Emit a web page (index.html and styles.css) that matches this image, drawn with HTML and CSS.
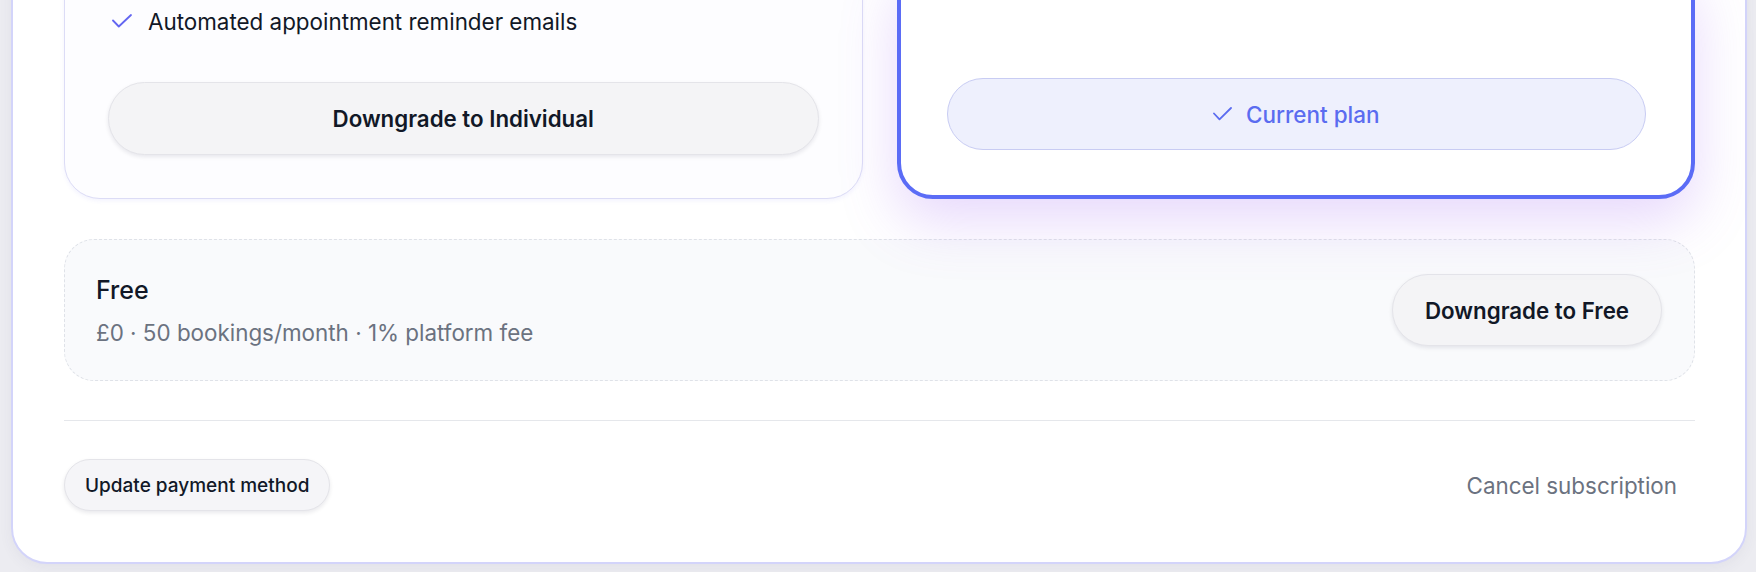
FILE: index.html
```html
<!DOCTYPE html>
<html lang="en">
<head>
<meta charset="utf-8">
<title>Billing</title>
<link rel="stylesheet" href="styles.css">
</head>
<body>
<main class="panel">
  <section class="plans">
    <article class="plan">
      <ul class="features">
        <li class="feature">
          <svg class="tick" width="20" height="14" viewBox="0 0 20 14" aria-hidden="true"><path d="M1 6.5 L6.8 12.5 L19 1" /></svg>
          <span>Automated appointment reminder emails</span>
        </li>
      </ul>
      <button class="btn btn-plan" type="button">Downgrade to Individual</button>
    </article>
    <article class="plan plan-current">
      <div class="current-state">
        <svg class="tick tick-current" width="19" height="14" viewBox="0 0 19 14" aria-hidden="true"><path d="M1 6.5 L6.5 12.3 L18 1" /></svg>
        <span>Current plan</span>
      </div>
    </article>
  </section>

  <section class="free-row">
    <div class="free-info">
      <h3 class="free-title">Free</h3>
      <p class="free-meta">£0 · 50 bookings/month · 1% platform fee</p>
    </div>
    <button class="btn btn-free" type="button">Downgrade to Free</button>
  </section>

  <hr class="divider">

  <footer class="actions">
    <button class="btn btn-small" type="button">Update payment method</button>
    <button class="link-btn" type="button">Cancel subscription</button>
  </footer>
</main>
</body>
</html>
```

FILE: styles.css
```css
* {
  box-sizing: border-box;
}

html,
body {
  margin: 0;
  padding: 0;
}

body {
  background: #ececf1;
  font-family: Inter, "Noto Sans", "Liberation Sans", sans-serif;
  color: #111827;
  height: 572px;
  overflow: hidden;
}

/* outer billing panel, scrolled so its top lies above the window */
.panel {
  margin: -80px 9px 0 11px;
  background: #ffffff;
  border: 2px solid #d3d4fa;
  border-radius: 36px;
  padding: 40px 50px 51px 51px;
  box-shadow: 0 4px 14px rgba(60, 60, 110, 0.06);
}

/* plan cards */
.plans {
  display: grid;
  grid-template-columns: 1fr 1fr;
  gap: 34px;
}

.plan {
  display: flex;
  flex-direction: column;
  background: #fdfdff;
  border: 1px solid #dcdcf6;
  border-radius: 36px;
  padding: 43px;
  box-shadow: 0 2px 4px rgba(99, 102, 241, 0.08);
}

.plan-current {
  position: relative;
  background: #ffffff;
  border: 4px solid #5b6cf6;
  padding: 40px 45px 45px 46px;
  box-shadow: 0 22px 56px 0 rgba(160, 100, 245, 0.25);
  justify-content: flex-end;
}

.features {
  list-style: none;
  margin: 0 0 46px;
  padding: 0;
}

.feature {
  display: flex;
  align-items: center;
  gap: 16px;
  padding-left: 4px;
  height: 30px;
  font-size: 22.4px;
  color: #111827;
}

.tick path {
  fill: none;
  stroke: #6366f1;
  stroke-width: 1.8;
  stroke-linecap: round;
  stroke-linejoin: round;
}

/* pill buttons */
.btn {
  font-family: inherit;
  border-radius: 999px;
  cursor: pointer;
  background: #f4f4f6;
  border: 1px solid #e4e4e9;
  color: #111827;
  box-shadow: 0 2px 4px rgba(15, 15, 40, 0.09);
}

.btn-plan {
  margin-top: auto;
  width: 100%;
  height: 73px;
  font-size: 22.3px;
  font-weight: 600;
}

.current-state {
  display: flex;
  align-items: center;
  justify-content: center;
  gap: 14px;
  height: 72px;
  border-radius: 999px;
  background: #eef0fd;
  border: 1px solid #c8ccf3;
  color: #5b6cf0;
  font-size: 22.5px;
  font-weight: 500;
}

.tick-current path {
  stroke: #5b6cf0;
}

/* free tier row */
.free-row {
  margin-top: 40px;
  display: flex;
  align-items: center;
  justify-content: space-between;
  height: 142px;
  padding: 0 32px 0 31px;
  background: #f9fafc;
  border: 1px dashed #dfe2e8;
  border-radius: 30px;
}

.free-info {
  padding-top: 2px;
}

.free-title {
  margin: 0;
  font-size: 25px;
  line-height: 30px;
  font-weight: 500;
  color: #111827;
}

.free-meta {
  margin: 14px 0 0;
  font-size: 22.4px;
  line-height: 28px;
  color: #6b7280;
}

.btn-free {
  height: 72px;
  padding: 0 32px;
  font-size: 22.3px;
  font-weight: 600;
}

.divider {
  margin: 39px 0 0;
  border: 0;
  border-top: 1px solid #e5e7eb;
}

/* footer actions */
.actions {
  display: flex;
  align-items: center;
  justify-content: space-between;
  padding-top: 38px;
}

.btn-small {
  height: 52px;
  padding: 0 20px;
  font-size: 19px;
  font-weight: 500;
  background: #f5f5f8;
}

.link-btn {
  font-family: inherit;
  background: transparent;
  border: 0;
  padding: 0 18px;
  height: 52px;
  font-size: 22.4px;
  color: #6b7280;
  cursor: pointer;
}
```
